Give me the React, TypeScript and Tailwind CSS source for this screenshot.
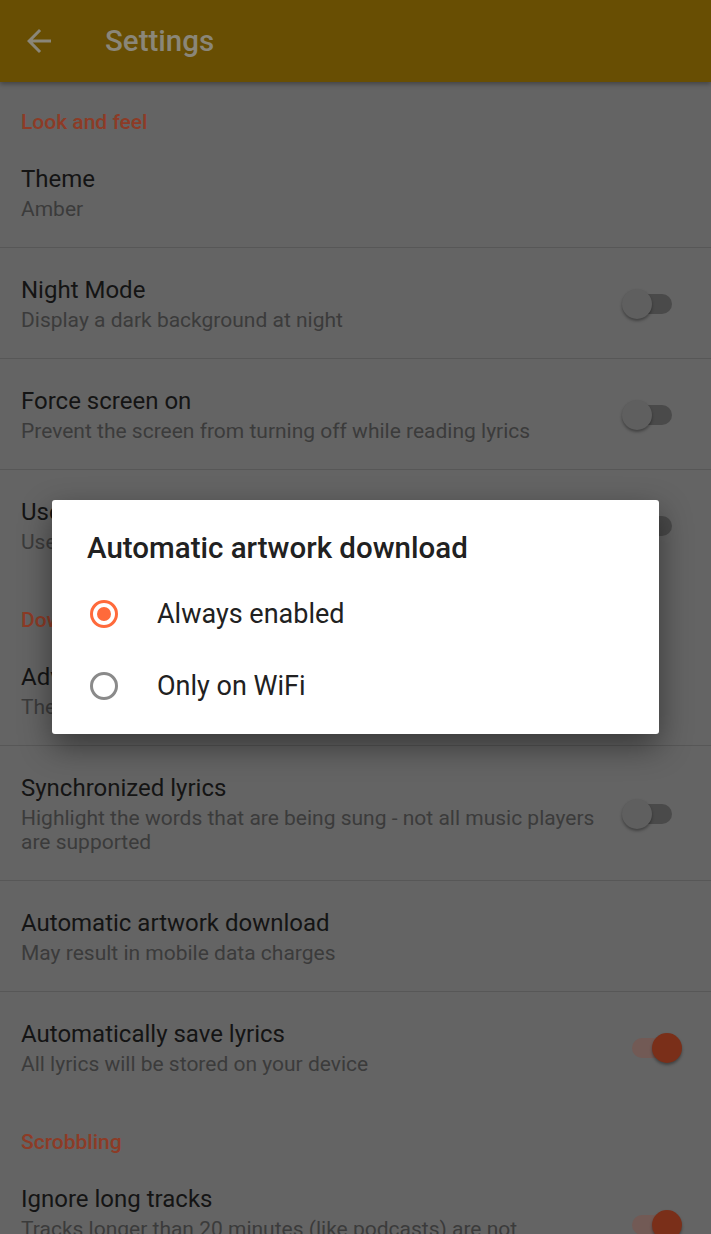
import { useState } from 'react';

type Pref = {
  title: string;
  summary: string;
  toggle?: 'on' | 'off';
  divider?: boolean;
};

type Category = { name?: string; items: Pref[] };

const categories: Category[] = [
  {
    name: 'Look and feel',
    items: [
      { title: 'Theme', summary: 'Amber', divider: true },
      { title: 'Night Mode', summary: 'Display a dark background at night', toggle: 'off', divider: true },
      { title: 'Force screen on', summary: 'Prevent the screen from turning off while reading lyrics', toggle: 'off', divider: true },
      { title: 'Use system notification', summary: 'Use the lyrics notification while playing', toggle: 'off' },
    ],
  },
  {
    name: 'Download',
    items: [
      { title: 'Advanced search', summary: 'The lyrics provider to search first', divider: true },
      { title: 'Synchronized lyrics', summary: 'Highlight the words that are being sung - not all music players are supported', toggle: 'off', divider: true },
      { title: 'Automatic artwork download', summary: 'May result in mobile data charges', divider: true },
      { title: 'Automatically save lyrics', summary: 'All lyrics will be stored on your device', toggle: 'on' },
    ],
  },
  {
    name: 'Scrobbling',
    items: [
      { title: 'Ignore long tracks', summary: 'Tracks longer than 20 minutes (like podcasts) are not scrobbled', toggle: 'on' },
    ],
  },
];

function Switch({ on }: { on: boolean }) {
  return (
    <div className="relative w-[60px] h-[30px] shrink-0">
      <div className={`absolute left-[10px] top-[5px] w-[40px] h-[20px] rounded-full ${on ? 'bg-[#725a55]' : 'bg-[#4a4a4a]'}`} />
      <div
        className={`absolute top-0 w-[30px] h-[30px] rounded-full shadow-[0_2px_3px_rgba(0,0,0,0.35)] ${on ? 'right-0 bg-[#7a2f19]' : 'left-0 bg-[#5f5f5f]'}`}
      />
    </div>
  );
}

function Row({ p }: { p: Pref }) {
  return (
    <div className={`flex items-center pl-[21px] pr-[29px] pt-[28px] pb-[26px] ${p.divider ? 'border-b border-[#575757]' : ''}`}>
      <div className="flex-1 min-w-0">
        <div className="text-[24px] leading-[28px] text-[#141414]">{p.title}</div>
        <div className="mt-[4px] text-[21px] leading-[24px] text-[#3b3b3b]">{p.summary}</div>
      </div>
      {p.toggle && (
        <div className="ml-[24px]">
          <Switch on={p.toggle === 'on'} />
        </div>
      )}
    </div>
  );
}

function Radio({ checked }: { checked: boolean }) {
  return (
    <svg width="30" height="30" viewBox="0 0 30 30" className="shrink-0">
      <circle cx="15" cy="15" r="12.5" fill="none" stroke={checked ? '#ff6a3b' : '#8a8a8a'} strokeWidth="3" />
      {checked && <circle cx="15" cy="15" r="7" fill="#ff6a3b" />}
    </svg>
  );
}

export default function App() {
  const [choice, setChoice] = useState(0);
  const options = ['Always enabled', 'Only on WiFi'];

  return (
    <div className="relative h-[1234px] w-full overflow-hidden bg-[#646464]" style={{ fontFamily: 'Roboto, "Noto Sans", sans-serif' }}>
      {/* toolbar */}
      <header className="relative z-10 flex items-center h-[82px] bg-[#684e03] shadow-[0_2px_5px_rgba(0,0,0,0.35)]">
        <svg width="36" height="36" viewBox="0 0 24 24" className="ml-[21px]" fill="#8a8679">
          <path d="M20 11H7.83l5.59-5.59L12 4l-8 8 8 8 1.41-1.41L7.83 13H20v-2z" />
        </svg>
        <h1 className="ml-[48px] text-[29.5px] font-medium text-[#8a8679]">Settings</h1>
      </header>

      {categories.map((c) => (
        <section key={c.name}>
          <div className="pl-[21px] pt-[29px] pb-[4px] text-[21px] leading-[22px] font-medium text-[#8d3b26]">{c.name}</div>
          {c.items.map((p) => (
            <Row key={p.title} p={p} />
          ))}
        </section>
      ))}

      {/* dialog */}
      <div className="absolute inset-0 z-20 flex items-center justify-center">
        <div className="w-[607px] h-[234px] bg-white rounded-[3px] shadow-[0_12px_32px_rgba(0,0,0,0.45)] pt-[31px]">
          <div className="pl-[35px] text-[29.5px] leading-[34px] font-medium text-[#212121]">Automatic artwork download</div>
          <div className="mt-[13px]">
            {options.map((o, i) => (
              <button key={o} onClick={() => setChoice(i)} className="flex items-center w-full h-[72px] pl-[37px] text-left">
                <Radio checked={choice === i} />
                <span className="ml-[38px] text-[27px] text-[#212121]">{o}</span>
              </button>
            ))}
          </div>
        </div>
      </div>
    </div>
  );
}
